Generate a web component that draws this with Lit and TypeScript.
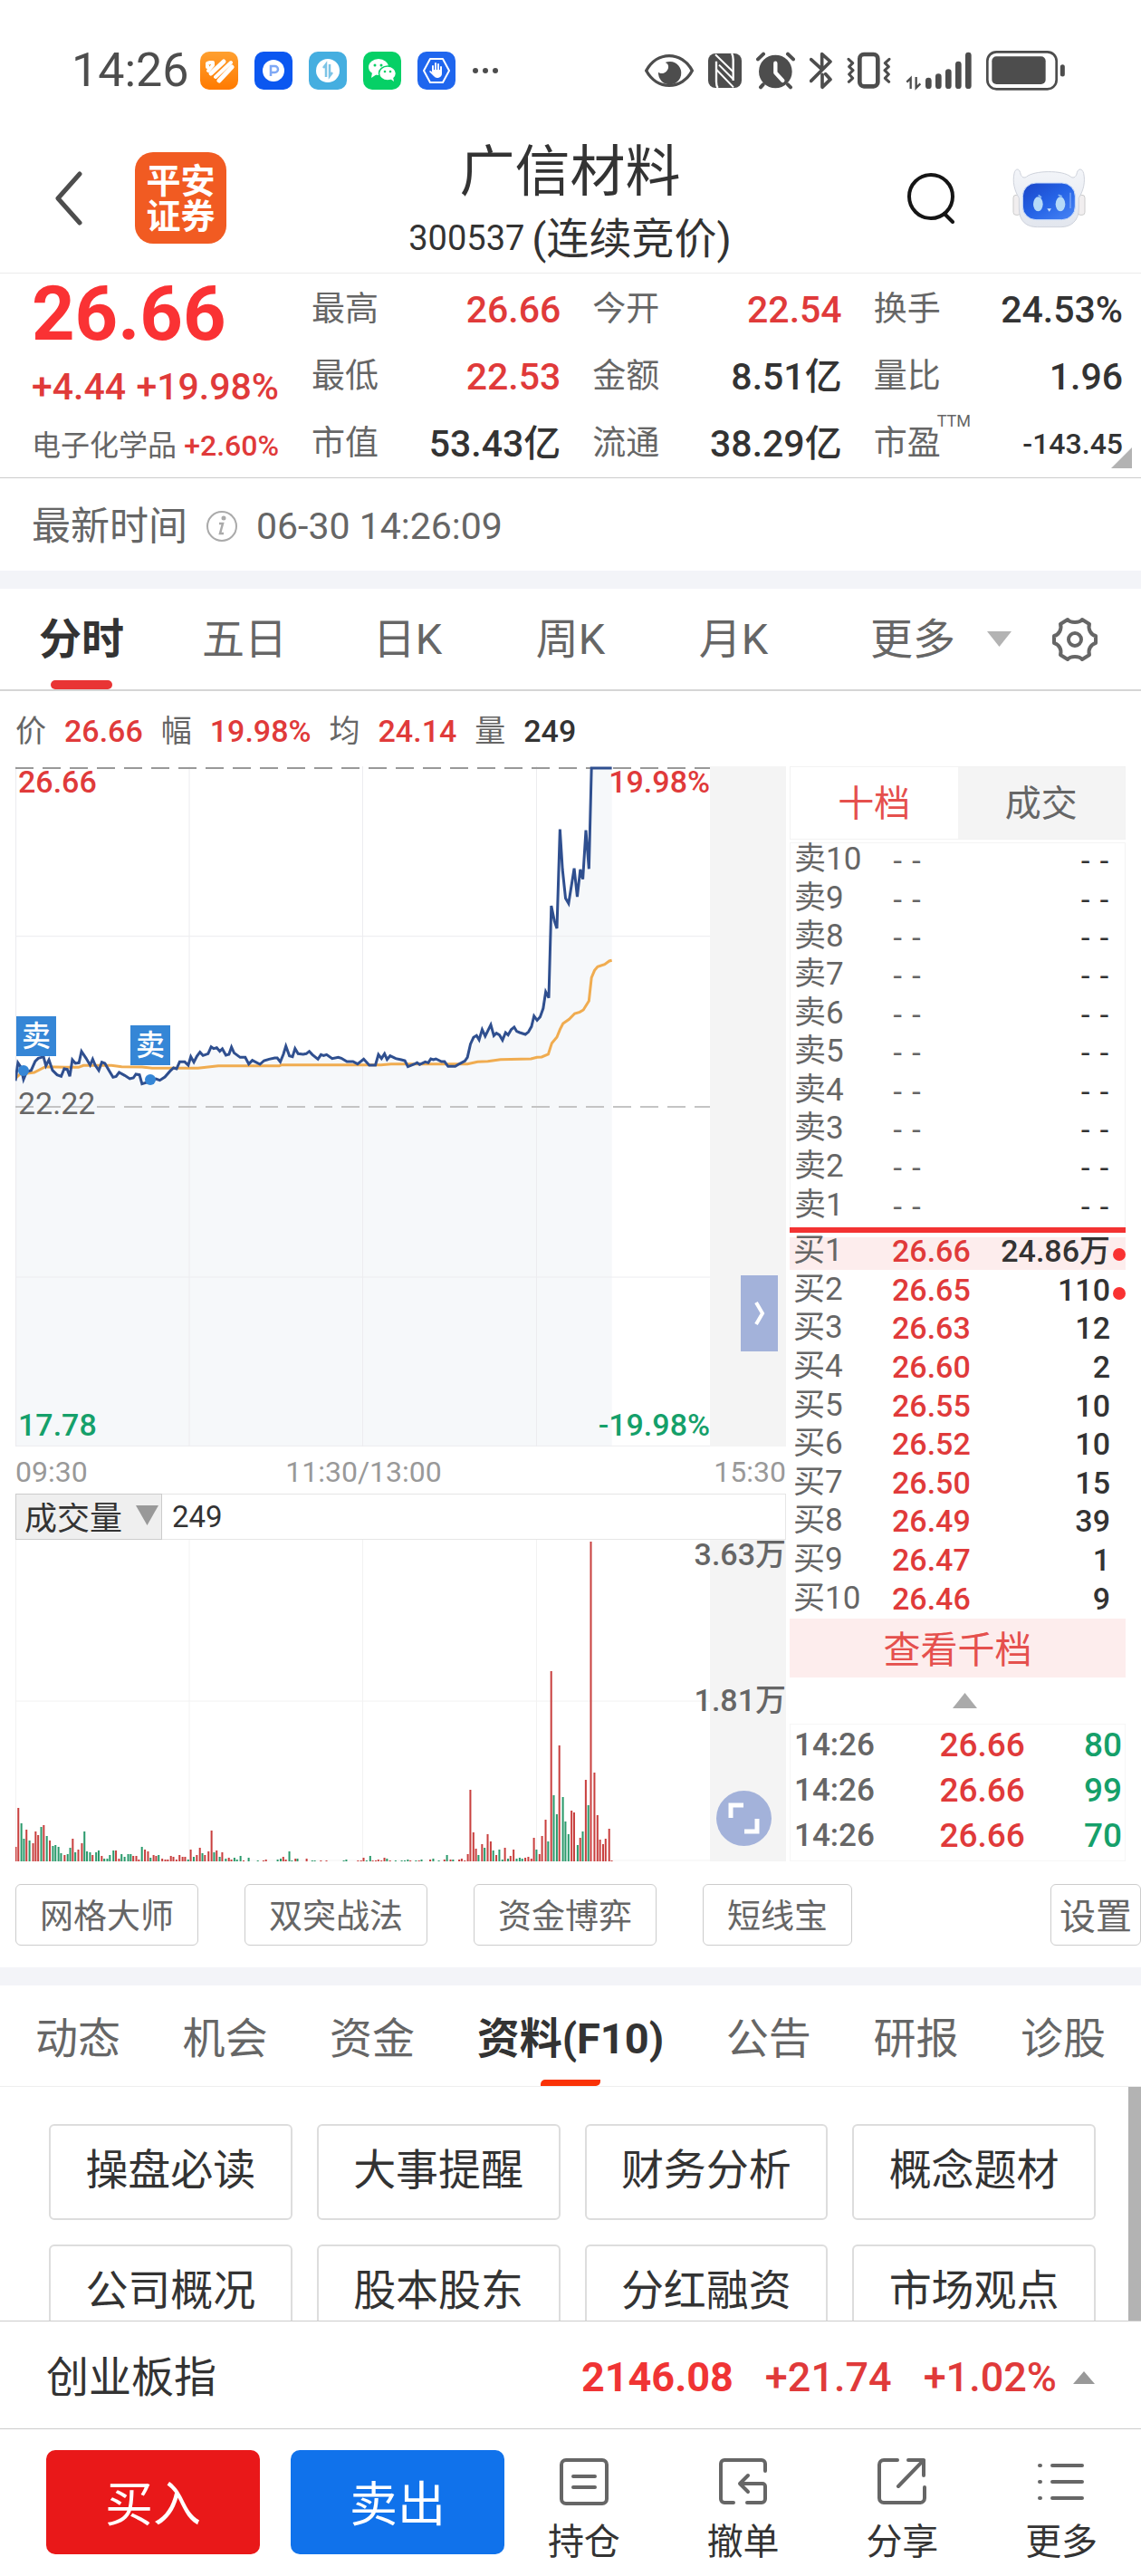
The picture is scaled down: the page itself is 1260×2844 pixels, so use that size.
import { LitElement, html, svg, css } from "lit";
import { customElement, state } from "lit/decorators.js";
import { classMap } from "lit/directives/class-map.js";

/* Intraday price line, one vertex per reading. x runs 31..1397, y runs 48..2301. */
const PRICE =
  "31,1090 36,1030 42,1045 47,1085 53,1060 62,1055 70,1025 76,1015 82,1012 86,1008 91,1040 97,1020 104,1055 113,1070 121,1075 127,1050 133,1052 138,1075 143,1020 149,1032 156,1030 161,992 170,1015 178,1038 183,1018 188,1038 195,1055 201,1028 207,1032 215,1055 223,1078 229,1075 235,1062 246,1072 256,1083 263,1080 268,1068 275,1070 280,1100 290,1095 297,1087 307,1083 315,1088 325,1077 335,1058 342,1047 348,1050 354,1027 364,1027 371,1038 376,1010 382,1028 388,1008 394,995 400,1006 410,1000 416,977 421,983 427,980 433,992 438,984 445,1005 451,1002 456,978 461,997 473,1012 483,1012 490,1034 497,1022 512,1035 520,1023 530,1018 541,1014 546,1014 552,1027 558,1002 563,975 570,1007 576,1010 581,983 587,1000 597,1002 603,1000 609,992 615,1003 626,1018 632,1003 637,1006 643,1003 654,1016 666,1012 672,1015 683,1026 695,1026 704,1034 716,1018 727,1038 739,1038 745,1003 751,1016 757,1000 762,1019 768,1007 779,1016 790,1020 797,1023 803,1043 815,1035 821,1030 826,1036 837,1027 843,1030 848,1017 853,1020 858,1017 869,1026 875,1026 882,1042 896,1042 905,1033 915,1024 920,1012 926,968 932,946 938,940 943,954 949,920 955,942 966,904 972,940 977,932 983,938 989,955 995,930 1000,938 1006,920 1012,912 1017,926 1023,930 1034,936 1040,928 1046,910 1051,875 1057,889 1063,878 1069,850 1074,795 1080,815 1085,510 1091,560 1096,585 1102,257 1107,390 1113,485 1119,502 1130,386 1136,480 1142,390 1147,422 1153,260 1159,388 1164,54 1204,54";

const AVERAGE =
  "31,1082 40,1068 68,1062 90,1043 130,1045 155,1045 165,1039 220,1039 240,1043 280,1044 300,1048 390,1048 430,1040 550,1040 555,1037 750,1037 770,1034 920,1034 940,1027 960,1025 985,1019 1045,1017 1057,1012 1066,1011 1079,1002 1086,965 1096,945 1102,920 1108,900 1120,886 1131,867 1141,862 1148,855 1159,825 1164,748 1170,724 1176,712 1190,704 1199,693 1204,691";

/* Volume bars as x:height, r for a rising minute and g for a falling one. */
const VOLUME =
  "32:16r 37:59r 43:42g 48:25g 53:35r 59:23g 66:20r 71:33r 76:29r 82:38g 87:40r 93:28g 99:23r 105:17g 110:18g 116:16g 121:9g 128:7r 134:8g 139:15g 144:25r 149:10g 155:13r 162:20r 167:33g 172:11g 178:10g 183:7r 190:10g 195:12g 201:6r 206:3g 212:3g 217:7g 224:12g 229:12r 235:3r 240:8g 246:5g 253:8g 258:8g 263:6r 269:6r 274:2r 280:16g 286:13r 292:11r 297:4g 303:7r 308:6r 313:7g 320:3r 326:2r 331:2r 337:6r 342:5r 348:2r 354:7r 360:5r 365:5r 371:2g 376:13r 382:5g 388:7r 394:15r 399:9g 404:7r 411:11r 417:34r 422:10g 427:12r 433:5g 438:10r 445:3g 451:4r 456:2r 462:4g 467:2g 474:6g 480:1r 490:4g 508:1g 519:1r 524:2r 547:2g 553:3g 558:5r 563:2r 570:11g 575:1g 582:3r 586:3g 604:3r 615:1g 620:1g 632:1r 643:1r 677:1g 682:2g 705:1r 711:1r 716:4r 722:1g 729:6g 734:1r 740:1r 745:2r 751:1r 757:4r 762:3g 768:1r 779:1g 791:1g 797:1g 803:2g 808:1r 819:1g 825:1r 830:2g 847:2r 853:3g 864:1g 875:2r 880:7g 887:2r 892:2g 904:2r 909:3r 915:1r 921:8r 926:79r 932:32r 937:14r 942:7g 949:19r 954:15g 960:30r 966:22r 971:12g 977:7r 983:13g 989:2g 994:15r 1000:3g 1005:6r 1011:13r 1017:3g 1023:4g 1028:3g 1034:4r 1040:5r 1046:3r 1051:26r 1056:13g 1062:8r 1067:28r 1074:46r 1079:22g 1085:210r 1090:73g 1096:52g 1101:128r 1108:71g 1113:44g 1119:30g 1125:56r 1130:54r 1137:18g 1142:26r 1147:33g 1153:90r 1158:62g 1163:353r 1170:98r 1176:51r 1181:24r 1187:19r 1192:25r 1199:36r 1204:1r"
    .split(" ")
    .map((item) => {
      const [x, rest] = item.split(":");
      return { x: Number(x), h: parseInt(rest, 10), up: rest.endsWith("r") };
    });

const STATS = [
  { label: "最高", value: "26.66", tone: "up" },
  { label: "今开", value: "22.54", tone: "up" },
  { label: "换手", value: "24.53%", tone: "" },
  { label: "最低", value: "22.53", tone: "up" },
  { label: "金额", value: "8.51亿", tone: "" },
  { label: "量比", value: "1.96", tone: "" },
  { label: "市值", value: "53.43亿", tone: "" },
  { label: "流通", value: "38.29亿", tone: "" },
  { label: "市盈", value: "-143.45", tone: "small", note: "TTM" },
];

const ASKS = [10, 9, 8, 7, 6, 5, 4, 3, 2, 1];
const BIDS = [
  { price: "26.66", size: "24.86万", dot: true },
  { price: "26.65", size: "110", dot: true },
  { price: "26.63", size: "12" },
  { price: "26.60", size: "2" },
  { price: "26.55", size: "10" },
  { price: "26.52", size: "10" },
  { price: "26.50", size: "15" },
  { price: "26.49", size: "39" },
  { price: "26.47", size: "1" },
  { price: "26.46", size: "9" },
];
const TRADES = [
  { time: "14:26", price: "26.66", size: "80" },
  { time: "14:26", price: "26.66", size: "99" },
  { time: "14:26", price: "26.66", size: "70" },
];

const base = css`
  * { box-sizing: border-box; }
  button, select {
    font: inherit; color: inherit; background: none; border: 0; margin: 0; padding: 0;
    cursor: pointer; white-space: nowrap;
  }
  a { color: inherit; text-decoration: none; }
  svg { display: block; flex: none; }
  table { border-collapse: collapse; width: 100%; }
  td, th { padding: 0; font-weight: inherit; text-align: left; }
  .up { color: #e03a3a; }
  .down { color: #15a06a; }
`;

@customElement("status-bar")
export class StatusBar extends LitElement {
  static styles = [base, css`
    :host { display: flex; justify-content: space-between; align-items: center; padding: 55px 84px 35px 79px; color: #4d4d4d; }
    .side { display: flex; align-items: center; height: 46px; }
    .apps { gap: 18px; }
    .clock { font-size: 52px; line-height: 46px; margin-right: -6px; }
    .tray { gap: 16px; }
  `];
  render() {
    return html`
      <div class="side apps">
        <span class="clock">14:26</span>
        <svg width="42" height="42" viewBox="0 0 42 42">
          <defs><linearGradient id="o" x2="0" y2="1"><stop stop-color="#ffa030"/><stop offset="1" stop-color="#ff7a00"/></linearGradient></defs>
          <rect width="42" height="42" rx="10" fill="url(#o)"/>
          <g fill="none" stroke="#fff" stroke-linecap="round" stroke-linejoin="round">
            <path d="M8 17v-4l3-1h3v3l-5 6" stroke-width="4"/>
            <path d="M12 24 26 11" stroke-width="5"/>
            <path d="M17 28 34 12" stroke-width="4"/>
            <path d="M21 32 35 17" stroke-width="5"/>
          </g>
        </svg>
        <svg width="42" height="42" viewBox="0 0 42 42">
          <rect width="42" height="42" rx="10" fill="#0b57f0"/><circle cx="21" cy="21" r="12" fill="#fff"/>
          <path d="M18 27V16h4.500a3.500 3.500 0 0 1 0 7H18" fill="none" stroke="#7fa8f5" stroke-width="2.500"/>
        </svg>
        <svg width="42" height="42" viewBox="0 0 42 42">
          <rect width="42" height="42" rx="10" fill="#45aee0"/><circle cx="21" cy="21" r="13" fill="#fff"/>
          <path d="M16 18l3-4v14M23 14v13l3-4" fill="none" stroke="#7cc4e6" stroke-width="2.500"/>
        </svg>
        <svg width="42" height="42" viewBox="0 0 42 42">
          <rect width="42" height="42" rx="10" fill="#06d066"/>
          <ellipse cx="17" cy="17" rx="11" ry="9" fill="#fff"/><path d="M10 23l-1 6 6-4z" fill="#fff"/>
          <ellipse cx="27" cy="24" rx="9.500" ry="8" fill="#fff" stroke="#06d066" stroke-width="1.500"/><path d="M30 30l4 3-1-5z" fill="#fff"/>
          <g fill="#06d066"><circle cx="13" cy="15" r="1.500"/><circle cx="20" cy="15" r="1.500"/><circle cx="24" cy="22" r="1.300"/><circle cx="30" cy="22" r="1.300"/></g>
        </svg>
        <svg width="42" height="42" viewBox="0 0 42 42">
          <rect width="42" height="42" rx="10" fill="#1f66ee"/>
          <path d="M14 8h14l7 13-7 13H14L7 21z" fill="none" stroke="#fff" stroke-width="2" stroke-linejoin="round"/>
          <path d="M17 22v-6M20 21v-8M23 21v-7M26 22v-5" stroke="#fff" stroke-width="2" stroke-linecap="round"/>
          <path d="M16 20h11v4a5 5 0 0 1-9 3l-5-5 1-1 3 2z" fill="#fff"/>
        </svg>
        <svg width="30" height="42" viewBox="0 0 30 42" fill="#4d4d4d"><circle cx="4" cy="21" r="3"/><circle cx="15" cy="21" r="3"/><circle cx="26" cy="21" r="3"/></svg>
      </div>
      <div class="side tray">
        <svg width="54" height="46" viewBox="36 30 162 138">
          <path d="M41 99C58 68 86 50 117 50s60 18 76 49c-16 31-45 49-76 49S58 130 41 99z" fill="none" stroke="#4d4d4d" stroke-width="10"/>
          <path d="M104 72a38 38 0 1 1-23 32c6 5 18 6 27-3 10-10 8-25-4-29z" fill="#4d4d4d"/>
        </svg>
        <svg width="37" height="46" viewBox="246 30 111 138">
          <rect x="246" y="42" width="111" height="114" rx="24" fill="#4d4d4d"/>
          <path d="M278 156c-5-6-5-12-5-20V68M324 42c5 6 5 12 5 20v70" fill="none" stroke="#fff" stroke-width="7"/>
          <path d="M270 46l58 56M274 96l56 58M282 80l46 46" stroke="#fff" stroke-width="6"/>
        </svg>
        <svg width="43" height="46" viewBox="405 30 129 138">
          <circle cx="469" cy="102" r="55" fill="#4d4d4d"/>
          <path d="M411 61l18-17M528 61l-18-17M428 145l-8 9M510 145l9 9" stroke="#4d4d4d" stroke-width="12" stroke-linecap="round"/>
          <path d="M469 74v32l24 26" fill="none" stroke="#fff" stroke-width="13" stroke-linecap="round" stroke-linejoin="round"/>
        </svg>
        <svg width="25" height="46" viewBox="582 30 75 138">
          <path d="M587 62l36 33V44l28 25-64 64M624 112v42l27-26-16-18" fill="none" stroke="#4d4d4d" stroke-width="11" stroke-linecap="round" stroke-linejoin="round"/>
        </svg>
        <svg width="49" height="46" viewBox="705 30 147 138">
          <rect x="748" y="45" width="60" height="106" rx="14" fill="none" stroke="#4d4d4d" stroke-width="14"/>
          <path d="M711 61l14 13-12 12 13 12-13 13 12 13-13 12M846 61l-14 13 12 12-13 12 13 13-12 13 13 12" fill="none" stroke="#4d4d4d" stroke-width="9" stroke-linecap="round" stroke-linejoin="round"/>
        </svg>
        <svg width="73" height="46" viewBox="900 30 219 138">
          <path d="M904 137l13-13v35M935 120v36l14-14" fill="none" stroke="#4d4d4d" stroke-width="7"/>
          <path d="M976 132v17M1009 119v30M1042 104v45M1075 78v71M1108 48v101" stroke="#4d4d4d" stroke-width="20" stroke-linecap="round"/>
        </svg>
        <svg width="87" height="46" viewBox="1167 30 261 138">
          <rect x="1171" y="37" width="229" height="123" rx="30" fill="none" stroke="#4d4d4d" stroke-width="8"/>
          <rect x="1186" y="52" width="178" height="92" rx="15" fill="#4d4d4d"/>
          <path d="M1420 86v25" stroke="#4d4d4d" stroke-width="15" stroke-linecap="round"/>
        </svg>
      </div>`;
  }
}

@customElement("stock-header")
export class StockHeader extends LitElement {
  static styles = [base, css`
    :host { display: grid; grid-template-columns: 1fr auto 1fr; align-items: center; padding: 0 61px 0 60px; border-bottom: 1px solid #ebebeb; }
    .left { display: flex; align-items: center; gap: 58px; }
    .right { display: flex; align-items: center; justify-content: flex-end; gap: 64px; }
    .logo { display: grid; place-content: center; width: 101px; height: 101px; padding-top: 2px; border-radius: 20px; background: #f15b22; color: #fff; font-size: 38px; line-height: 39px; font-weight: 700; text-align: center; }
    .names { padding-top: 18px; text-align: center; color: #333; }
    .name { font-size: 61px; line-height: 72px; font-weight: 400; margin: 0; }
    .code { display: flex; gap: 8px; justify-content: center; font-size: 38px; line-height: 75px; margin: 0; }
    .phase { font-size: 47px; }
  `];
  render() {
    return html`
      <div class="left">
        <button aria-label="返回"><svg width="31" height="60" viewBox="0 0 31 60"><path d="M28 3 4 30l24 27" fill="none" stroke="#4d4d4d" stroke-width="5" stroke-linecap="round" stroke-linejoin="round"/></svg></button>
        <div class="logo"><span>平安</span><span>证券</span></div>
      </div>
      <div class="names">
        <h1 class="name">广信材料</h1>
        <p class="code"><span>300537</span><span class="phase">(连续竞价)</span></p>
      </div>
      <div class="right">
        <button aria-label="搜索"><svg width="52" height="56" viewBox="0 0 52 56"><circle cx="26" cy="26" r="24" fill="none" stroke="#151515" stroke-width="4"/><path d="M41 45l9 9" stroke="#151515" stroke-width="4" stroke-linecap="round"/></svg></button>
        <button aria-label="智能助手">
          <svg width="81" height="66" viewBox="0 0 243 198">
            <defs>
              <linearGradient id="face" x1="0" y1="0" x2="1" y2="1"><stop stop-color="#1a45c8"/><stop offset=".5" stop-color="#2563e6"/><stop offset="1" stop-color="#4a86f5"/></linearGradient>
              <linearGradient id="shell" x2="0" y2="1"><stop stop-color="#f3f5f9"/><stop offset="1" stop-color="#e2e6ee"/></linearGradient>
            </defs>
            <rect x="3" y="88" width="24" height="66" rx="9" fill="#f1eeef" stroke="#ccc" stroke-width="3"/>
            <rect x="216" y="88" width="24" height="66" rx="9" fill="#f1eeef" stroke="#ccc" stroke-width="3"/>
            <path d="M22 98C6 72 0 44 6 16 9 0 22-2 26 14c2 12 10 20 20 14C70 6 168 4 194 28c10 6 18-2 20-14 4-16 18-14 22 2 6 28 0 56-16 82v34c0 44-28 62-60 62H82c-34 0-60-18-60-62z" fill="url(#shell)" stroke="#cfd3dc" stroke-width="3"/>
            <rect x="34" y="48" width="174" height="122" rx="44" fill="url(#face)" stroke="#c9dcfb" stroke-width="3"/>
            <ellipse cx="85" cy="118" rx="16" ry="24" fill="#b5daf8"/><ellipse cx="159" cy="118" rx="16" ry="24" fill="#b5daf8"/>
            <path d="M86 88l10 8M152 88l12 4" stroke="#8dbcf5" stroke-width="5"/>
            <path d="M115 133h14l-7 10z" fill="#cfe4fb"/><path d="M192 80v52" stroke="#6f9df5" stroke-width="5"/>
          </svg>
        </button>
      </div>`;
  }
}

@customElement("quote-summary")
export class QuoteSummary extends LitElement {
  static styles = [base, css`
    :host { display: block; color: #333; }
    .quote { position: relative; display: grid; grid-template-columns: 273px minmax(0, 1fr); gap: 36px; padding: 3px 20px 0 35px; border-bottom: 1px solid #ccc; }
    .price { font-size: 83px; line-height: 84px; font-weight: 700; color: #fa3234; }
    .change { display: flex; justify-content: space-between; font-size: 41px; line-height: 76px; font-weight: 500; }
    .sector { display: flex; justify-content: space-between; align-items: center; font-size: 32px; line-height: 54px; color: #666; }
    .sector .up { font-weight: 500; }
    .stats { display: grid; grid-template-columns: repeat(3, 1fr); column-gap: 35px; margin: 0; }
    .stat { display: flex; justify-content: space-between; line-height: 74px; }
    dt { position: relative; font-size: 37px; color: #666; }
    dd { margin: 0; font-size: 41px; font-weight: 500; }
    .small { font-size: 32px; }
    .note { position: absolute; left: 70px; top: 0; font-size: 18px; line-height: 24px; }
    .corner { position: absolute; right: 10px; bottom: 10px; }
    .time { display: flex; align-items: center; gap: 20px; height: 102px; padding: 3px 35px 0; font-size: 43px; line-height: 56px; color: #666; }
    .stamp { font-size: 41px; }
  `];
  render() {
    return html`
      <section class="quote">
        <div>
          <div class="price">26.66</div>
          <div class="change up"><span>+4.44</span><span>+19.98%</span></div>
          <div class="sector"><span>电子化学品</span><span class="up">+2.60%</span></div>
        </div>
        <dl class="stats">
          ${STATS.map((s) => html`
            <div class="stat">
              <dt>${s.label}${s.note ? html`<span class="note">${s.note}</span>` : ""}</dt>
              <dd class=${s.tone}>${s.value}</dd>
            </div>`)}
        </dl>
        <svg class="corner" width="23" height="23" viewBox="0 0 23 23"><path d="M23 0v23H0z" fill="#b3b3b3"/></svg>
      </section>
      <section class="time">
        <span>最新时间</span>
        <svg width="36" height="36" viewBox="0 0 36 36" fill="none" stroke="#aaa" stroke-width="2"><circle cx="18" cy="18" r="16"/><path d="M15 15h4l-3 11h4" stroke-width="2.500"/><circle cx="20" cy="9" r="1.500" fill="#aaa"/></svg>
        <time class="stamp">06-30 14:26:09</time>
      </section>`;
  }
}

@customElement("trend-chart")
export class TrendChart extends LitElement {
  static styles = [base, css`
    :host { display: block; font-size: 34px; line-height: 36px; font-weight: 500; min-width: 0; }
    svg.fill { width: 100%; height: 100%; }
    .row { position: relative; display: grid; grid-template-columns: minmax(0, 1fr) 84px; }
    .pricebox { height: 751px; }
    .volbox { height: 355px; }
    .plot { position: relative; min-height: 0; }
    .rest { background: #f4f4f4; }
    .tag { position: absolute; }
    .l { left: 3px; }
    .r { right: 0; }
    .t { top: -1px; }
    .m { top: 354px; color: #666; font-weight: 400; }
    .b { bottom: 6px; }
    .sell { position: absolute; width: 44px; height: 44px; background: #3586d6; color: #fff; font-size: 32px; line-height: 44px; text-align: center; }
    .s1 { left: 1px; top: 276px; }
    .s2 { left: 127px; top: 286px; }
    .dot { position: absolute; width: 12px; height: 12px; border-radius: 50%; background: #3586d6; }
    .d1 { left: 3px; top: 330px; }
    .d2 { left: 143px; top: 340px; }
    .axis { display: flex; justify-content: space-between; padding: 10px 0 6px; color: #999; font-size: 32px; font-weight: 400; }
    .axis .mid { padding-right: 82px; }
    .head { display: flex; align-items: center; gap: 11px; border: 1px solid #e6e6e6; font-size: 33px; font-weight: 400; color: #333; }
    .pick { position: relative; background: #efefef; border: 1px solid #ccc; margin: -1px 0 -1px -1px; }
    .pick select { appearance: none; display: block; width: 160px; height: 49px; padding: 4px 0 0 9px; font-size: 36px; }
    .pick svg { position: absolute; right: 3px; top: 12px; pointer-events: none; }
    .pane { position: absolute; right: 9px; top: 562px; width: 41px; height: 84px; background: #a3b2da; display: grid; place-items: center; }
    .zoomer { position: absolute; right: 16px; bottom: 17px; }
    .scale { position: absolute; right: 0; top: -2px; color: #666; }
    .half { top: 159px; }
  `];
  render() {
    return html`
      <div class="row pricebox">
        <div class="plot">
          <svg class="fill" viewBox="31 48 1366 2253" preserveAspectRatio="none" role="img" aria-label="分时走势">
            <polygon points="${PRICE} 1204,2301 31,2301" fill="#f6f8fa"/>
            <g stroke="#ececef" stroke-width="1" fill="none">
              <path vector-effect="non-scaling-stroke" d="M32 48V2301M373 48V2301M714 48V2301M1056 48V2301M31 611H1397M31 1740H1397M31 2299H1397"/>
            </g>
            <path vector-effect="non-scaling-stroke" d="M31 54H1397" stroke="#999" stroke-width="2" stroke-dasharray="20 10"/>
            <path vector-effect="non-scaling-stroke" d="M31 1176H1397" stroke="#c4c4c4" stroke-width="2" stroke-dasharray="20 10"/>
            <polyline vector-effect="non-scaling-stroke" points=${AVERAGE} fill="none" stroke="#f0ac50" stroke-width="3"/>
            <polyline vector-effect="non-scaling-stroke" points=${PRICE} fill="none" stroke="#2f4f8f" stroke-width="3"/>
          </svg>
          <span class="tag l t up">26.66</span><span class="tag r t up">19.98%</span>
          <span class="tag l m">22.22</span>
          <span class="tag l b down">17.78</span><span class="tag r b down">-19.98%</span>
          <span class="dot d1"></span><span class="dot d2"></span>
          <span class="sell s1">卖</span><span class="sell s2">卖</span>
        </div>
        <div class="rest"></div>
        <button class="pane" aria-label="收起盘口"><svg width="16" height="28" viewBox="0 0 16 28"><path d="M4 2l7 12-7 12" fill="none" stroke="#fff" stroke-width="4"/></svg></button>
      </div>
      <div class="axis"><span>09:30</span><span class="mid">11:30/13:00</span><span>15:30</span></div>
      <div class="head">
        <div class="pick">
          <select aria-label="指标"><option>成交量</option></select>
          <svg width="25" height="22" viewBox="0 0 25 22"><path d="M0 0h25L12.500 22z" fill="#999"/></svg>
        </div>
        <span>249</span>
      </div>
      <div class="row volbox">
        <div class="plot">
          <svg class="fill" viewBox="31 0 1366 355" preserveAspectRatio="none" role="img" aria-label="成交量">
            <path vector-effect="non-scaling-stroke" d="M32 0V355M373 0V355M714 0V355M1056 0V355M31 178H1397M31 354H1397" stroke="#f2f2f2" stroke-width="1"/>
            ${VOLUME.map((v) => svg`<rect x=${v.x - 2} y=${355 - v.h} width="3.600" height=${v.h} fill=${v.up ? "#c9403f" : "#2b9a6c"}></rect>`)}
          </svg>
        </div>
        <div class="rest"></div>
        <span class="scale">3.63万</span>
        <span class="scale half">1.81万</span>
        <button class="zoomer" aria-label="全屏">
          <svg width="61" height="61" viewBox="0 0 61 61"><circle cx="30.500" cy="30.500" r="30.500" fill="#a3b2da"/><path d="M16 30V16h14M45 31v14H31" fill="none" stroke="#fff" stroke-width="5"/></svg>
        </button>
      </div>`;
  }
}

@customElement("order-book")
export class OrderBook extends LitElement {
  static styles = [base, css`
    :host { display: flex; flex-direction: column; font-size: 34px; line-height: 36px; color: #333; }
    .tabs { display: grid; grid-template-columns: 1fr 1fr; height: 81px; margin-bottom: 3px; background: #f4f4f4; border: 1px solid #f2f2f2; font-size: 40px; color: #666; }
    .tabs button { padding-top: 3px; }
    .tabs .on { background: #fff; color: #e5504d; }
    .asks { height: 425px; border: 1px solid #f4f4f4; border-bottom: 0; }
    .asks th, .asks td { padding-bottom: 6px; }
    .bids { border-top: 6px solid #f33232; }
    .bids table { height: 426px; }
    .bids th, .bids td { padding-bottom: 2px; }
    th { width: 113px; padding-left: 4px; color: #666; font-size: 35px; }
    .px { font-weight: 500; }
    .none { color: #666; }
    .dash { font-family: "Liberation Sans", sans-serif; }
    .qty { position: relative; padding-right: 17px; text-align: right; font-weight: 500; }
    .hot { background: linear-gradient(#fff 5px, #fdeded 5px, #fdeded 41px, #fff 41px); }
    .mark { position: absolute; right: 0; top: 17px; width: 14px; height: 14px; border-radius: 50%; background: #f93232; }
    .deep { height: 65px; padding-top: 4px; background: #fdeded; color: #e5504d; font-size: 41px; line-height: 60px; }
    .fold { display: grid; place-items: center; height: 51px; padding-left: 16px; }
    .trades { height: 152px; border: 1px solid #f6f6f6; color: #666; font-weight: 500; }
    .trades th { width: 165px; padding-left: 4px; }
    .trades th, .trades td { padding-bottom: 4px; }
    .trades .p, .trades .v { font-size: 37px; }
    .trades .v { text-align: right; padding-right: 3px; }
  `];
  render() {
    return html`
      <div class="tabs"><button class="on">十档</button><button>成交</button></div>
      <table class="asks"><tbody>
        ${ASKS.map((n) => html`<tr><th scope="row">卖${n}</th><td class="none dash">- -</td><td class="qty dash">- -</td></tr>`)}
      </tbody></table>
      <div class="bids"><table><tbody>
        ${BIDS.map((b, i) => html`<tr class=${classMap({ hot: i === 0 })}>
          <th scope="row">买${i + 1}</th><td class="px up">${b.price}</td>
          <td class="qty">${b.size}${b.dot ? html`<span class="mark"></span>` : ""}</td></tr>`)}
      </tbody></table></div>
      <button class="deep">查看千档</button>
      <button class="fold" aria-label="展开明细"><svg width="27" height="17" viewBox="0 0 27 17"><path d="M13.500 0 27 17H0z" fill="#aaa"/></svg></button>
      <table class="trades"><tbody>
        ${TRADES.map((t) => html`<tr><th scope="row">${t.time}</th><td class="p up">${t.price}</td><td class="v down">${t.size}</td></tr>`)}
      </tbody></table>`;
  }
}

@customElement("trade-bar")
export class TradeBar extends LitElement {
  static styles = [base, css`
    :host { display: block; color: #333; background: #fff; }
    .index { display: flex; align-items: center; gap: 35px; height: 119px; padding: 5px 51px 0; border-top: 1px solid #ccc; font-size: 45px; line-height: 60px; }
    .title { margin-right: auto; font-size: 47px; }
    .index .up { font-weight: 500; }
    .index .last { font-weight: 700; color: #f03434; }
    .pct { display: flex; align-items: center; gap: 18px; }
    .actions { display: grid; grid-template-columns: 506fr 703fr; align-items: start; padding: 23px 0 9px 51px; border-top: 1px solid #ccc; }
    .trades { display: grid; grid-template-columns: 1fr 1fr; gap: 34px; }
    .trade { height: 115px; padding-top: 6px; border-radius: 10px; color: #fff; font-size: 53px; line-height: 60px; }
    .buy { background: #e91819; }
    .sell { background: #1072eb; }
    .links { display: grid; grid-template-columns: repeat(4, 1fr); }
    .link { display: flex; flex-direction: column; align-items: center; gap: 12px; padding-top: 8px; font-size: 40px; line-height: 56px; }
  `];
  render() {
    const icon = (body: unknown) => html`<svg width="54" height="54" viewBox="0 0 54 54" fill="none" stroke="#666" stroke-width="4" stroke-linecap="round" stroke-linejoin="round">${body}</svg>`;
    const links = [
      { label: "持仓", body: svg`<rect x="2" y="3" width="50" height="48" rx="5"/><path d="M15 21h24M15 33h24"/>` },
      { label: "撤单", body: svg`<path d="M51 15V7a4 4 0 0 0-4-4H6a4 4 0 0 0-4 4v39a4 4 0 0 0 4 4h10M31 50h16a4 4 0 0 0 4-4V32a3 3 0 0 0-3-3H25M32 20l-9 9 9 9"/>` },
      { label: "分享", body: svg`<path d="M22 3H7a5 5 0 0 0-5 5v37a5 5 0 0 0 5 5h40a5 5 0 0 0 5-5V33M34 3h17v17M51 3 23 32"/>` },
      { label: "更多", body: svg`<path d="M3 9h1M17 9h33M3 27h1M17 27h33M3 45h1M17 45h33"/>` },
    ];
    return html`
      <div class="index">
        <span class="title">创业板指</span>
        <span class="up last">2146.08</span><span class="up">+21.74</span>
        <span class="pct up"><span>+1.02%</span><svg width="24" height="14" viewBox="0 0 24 14"><path d="M12 0l12 14H0z" fill="#999"/></svg></span>
      </div>
      <div class="actions">
        <div class="trades">
          <button class="trade buy">买入</button>
          <button class="trade sell">卖出</button>
        </div>
        <nav class="links">${links.map((l) => html`<a class="link" href="#">${icon(l.body)}<span>${l.label}</span></a>`)}</nav>
      </div>`;
  }
}

@customElement("app-root")
export class AppRoot extends LitElement {
  @state() private period = "分时";
  @state() private tab = "资料(F10)";

  static styles = [base, css`
    :host { display: flex; flex-direction: column; height: 100vh; overflow: hidden; background: #fff; color: #333; font-family: Roboto, "Noto Sans CJK SC", sans-serif; }
    :host > * { flex: none; }
    .band { height: 20px; background: #f3f4f8; }
    .periods { display: grid; grid-template-columns: repeat(5, 1fr) 2fr; height: 113px; border-bottom: 2px solid #d5d5d5; font-size: 47px; line-height: 60px; color: #666; }
    .period, .tab { position: relative; }
    .on { font-weight: 700; color: #333; }
    .period.on::after { content: ""; position: absolute; left: 50%; bottom: 0; width: 68px; height: 10px; margin-left: -34px; border-radius: 5px; background: #e93434; }
    .extra { display: flex; align-items: center; justify-content: space-between; padding: 0 48px 0 61px; }
    .more { display: flex; align-items: center; gap: 35px; }
    .legend { display: flex; align-items: center; gap: 20px; height: 83px; padding: 4px 17px 0; font-size: 34px; line-height: 44px; color: #666; }
    .legend b { font-weight: 500; }
    .legend .dark { color: #333; }
    .market { display: grid; grid-template-columns: minmax(0, 1fr) 371px; gap: 4px; padding: 0 17px; }
    .tools { display: flex; gap: 51px; padding: 25px 0 24px 17px; font-size: 37px; line-height: 44px; color: #666; }
    .tool { height: 68px; padding: 5px 26px 0; border: 1px solid #ccc; border-radius: 6px; }
    .setup { margin-left: auto; padding: 5px 9px 0; font-size: 40px; }
    .tabs { display: flex; justify-content: space-between; height: 112px; padding: 0 39px; border-bottom: 1px solid #eee; font-size: 47px; line-height: 60px; color: #666; }
    .tab { padding-top: 6px; }
    .tab.on::after { content: ""; position: absolute; left: 50%; bottom: 0; width: 66px; height: 7px; margin-left: -33px; border-radius: 5px 0 5px 0; background: #fa3206; }
    .panel { flex: 1 1 0; min-height: 0; overflow: hidden; display: flex; }
    .cards { flex: 1; display: grid; grid-template-columns: repeat(4, 1fr); grid-auto-rows: 106px; gap: 27px; padding: 41px 36px 0 54px; }
    .card { display: grid; place-items: center; padding-bottom: 4px; border: 2px solid #ddd; border-radius: 6px; font-size: 47px; line-height: 60px; }
    .thumb { width: 14px; background: #b3b3b3; }
  `];

  render() {
    return html`
      <status-bar></status-bar>
      <stock-header></stock-header>
      <quote-summary></quote-summary>
      <div class="band"></div>
      <nav class="periods">
        ${["分时", "五日", "日K", "周K", "月K"].map((p) => html`
          <button class=${classMap({ period: true, on: this.period === p })} @click=${() => (this.period = p)}>${p}</button>`)}
        <div class="extra">
          <button class="more">更多<svg width="27" height="17" viewBox="0 0 27 17"><path d="M0 0h27L13.500 17z" fill="#b3b3b3"/></svg></button>
          <button aria-label="图表设置">
            <svg width="50" height="50" viewBox="0 0 50 50" fill="none" stroke="#666" stroke-width="4" stroke-linejoin="round">
              <path d="M17 3c3 4 13 4 16 0l8 5c-2 6 2 12 7 13v8c-5 1-9 7-7 13l-8 5c-3-4-13-4-16 0l-8-5c2-6-2-12-7-13v-8c5-1 9-7 7-13z"/>
              <circle cx="25" cy="25" r="7"/>
            </svg>
          </button>
        </div>
      </nav>
      <div class="legend">
        <span>价</span><b class="up">26.66</b><span>幅</span><b class="up">19.98%</b>
        <span>均</span><b class="up">24.14</b><span>量</span><b class="dark">249</b>
      </div>
      <main class="market"><trend-chart></trend-chart><order-book></order-book></main>
      <div class="tools">
        ${["网格大师", "双突战法", "资金博弈", "短线宝"].map((t) => html`<button class="tool">${t}</button>`)}
        <button class="tool setup">设置</button>
      </div>
      <div class="band"></div>
      <nav class="tabs">
        ${["动态", "机会", "资金", "资料(F10)", "公告", "研报", "诊股"].map((t) => html`
          <button class=${classMap({ tab: true, on: this.tab === t })} @click=${() => (this.tab = t)}>${t}</button>`)}
      </nav>
      <section class="panel">
        <div class="cards">
          ${["操盘必读", "大事提醒", "财务分析", "概念题材", "公司概况", "股本股东", "分红融资", "市场观点"].map((c) => html`<a class="card" href="#">${c}</a>`)}
        </div>
        <div class="thumb"></div>
      </section>
      <trade-bar></trade-bar>`;
  }
}
